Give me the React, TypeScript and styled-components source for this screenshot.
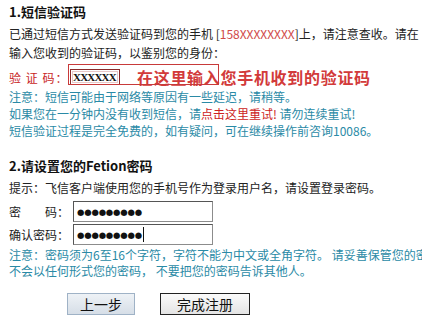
import React from "react";
import styled, { createGlobalStyle } from "styled-components";

const GlobalStyle = createGlobalStyle`
  html, body {
    margin: 0;
    padding: 0;
    background: #ffffff;
    overflow: hidden;
  }
  body {
    font-family: "Noto Sans CJK SC", "Noto Sans", sans-serif;
    font-size: 12px;
    color: #222222;
  }
`;

const Page = styled.div`
  width: 720px;
  padding: 3px 0 0 9px;
`;

const Title = styled.div<{ $top?: number }>`
  font-size: 13px;
  font-weight: 700;
  line-height: 18px;
  color: #111;
  margin-top: ${(p) => p.$top ?? 0}px;
  white-space: nowrap;
`;

const Para = styled.div<{ $top?: number; $lh?: number }>`
  line-height: ${(p) => p.$lh ?? 19}px;
  margin-top: ${(p) => p.$top ?? 0}px;
  white-space: nowrap;
`;

const Phone = styled.span`
  color: #d04848;
`;

const CodeRow = styled.div`
  position: relative;
  display: flex;
  align-items: center;
  height: 22px;
  margin-top: 4px;
  white-space: nowrap;
`;

const RedLabel = styled.span`
  color: #c81e1e;
  width: 61px;
  letter-spacing: 1px;
`;

const CodeBox = styled.div`
  box-sizing: border-box;
  width: 50px;
  height: 16px;
  border: 1px solid #8a2a2a;
  outline: 1px solid #e8c8c8;
  outline-offset: -3px;
  font-family: "Liberation Serif", serif;
  font-weight: 700;
  font-size: 11px;
  line-height: 14px;
  color: #111;
  padding-left: 2px;
  letter-spacing: -0.8px;
  overflow: hidden;
`;

const Hint = styled.span`
  margin-left: 17px;
  color: #d23a3a;
  font-size: 16px;
  font-weight: 700;
  letter-spacing: 0.7px;
`;

const Mark = styled.div`
  position: absolute;
  left: 59px;
  top: -2px;
  width: 151px;
  height: 21px;
  border: 1px solid #c83a3a;
  box-sizing: border-box;
  pointer-events: none;
`;

const Notes = styled.div<{ $lh: number; $top?: number }>`
  color: #2a8aa6;
  line-height: ${(p) => p.$lh}px;
  margin-top: ${(p) => p.$top ?? 0}px;
  white-space: nowrap;
`;

const Alert = styled.span`
  color: #cc2222;
`;

const FormGrid = styled.div`
  display: grid;
  grid-template-columns: 64px 140px;
  row-gap: 2px;
  margin-top: 4px;
  align-items: center;
`;

const FieldLabel = styled.span`
  line-height: 21px;
  white-space: pre;
`;

const PwBox = styled.div`
  box-sizing: border-box;
  height: 21px;
  border: 1px solid #8c8c8c;
  border-top-color: #555;
  border-left-color: #555;
  display: flex;
  align-items: center;
  padding-left: 3px;
  font-family: "DejaVu Sans", sans-serif;
  font-size: 8.5px;
  letter-spacing: -0.2px;
  color: #111;
`;

const Caret = styled.span`
  display: inline-block;
  width: 1px;
  height: 15px;
  background: #111;
  margin-left: 1px;
`;

const Buttons = styled.div`
  display: flex;
  gap: 25px;
  margin: 14px 0 0 58px;
`;

const Btn = styled.button<{ $primary?: boolean }>`
  box-sizing: border-box;
  height: 22px;
  width: ${(p) => (p.$primary ? 90 : 68)}px;
  padding: 0;
  font-family: "Noto Sans CJK SC", sans-serif;
  font-size: 14px;
  line-height: 20px;
  color: #111;
  border: 1px solid ${(p) => (p.$primary ? "#222" : "#9fb2c6")};
  background: ${(p) =>
    p.$primary
      ? "linear-gradient(#fbfbfb, #e4e4e4)"
      : "linear-gradient(#eef2f6, #d6dee7)"};
`;

export default function App() {
  return (
    <>
      <GlobalStyle />
      <Page>
        <Title>1.短信验证码</Title>
        <Para $top={3}>
          已通过短信方式发送验证码到您的手机 [<Phone>158XXXXXXXX</Phone>]上，请注意查收。请在
        </Para>
        <Para>输入您收到的验证码，以鉴别您的身份：</Para>
        <CodeRow>
          <RedLabel>验 证 码：</RedLabel>
          <CodeBox>XXXXXX</CodeBox>
          <Hint>在这里输入您手机收到的验证码</Hint>
          <Mark />
        </CodeRow>
        <Notes $lh={17}>
          <div>注意：短信可能由于网络等原因有一些延迟，请稍等。</div>
          <div>
            如果您在一分钟内没有收到短信，请<Alert>点击这里重试!</Alert> 请勿连续重试!
          </div>
          <div>短信验证过程是完全免费的，如有疑问，可在继续操作前咨询10086。</div>
        </Notes>
        <Title $top={18}>2.请设置您的Fetion密码</Title>
        <Para $top={4} $lh={18}>
          提示：飞信客户端使用您的手机号作为登录用户名，请设置登录密码。
        </Para>
        <FormGrid>
          <FieldLabel>{"密　　码："}</FieldLabel>
          <PwBox>●●●●●●●●●</PwBox>
          <FieldLabel>确认密码：</FieldLabel>
          <PwBox>
            ●●●●●●●●●
            <Caret />
          </PwBox>
        </FormGrid>
        <Notes $lh={16} $top={2}>
          <div>注意：密码须为6至16个字符，字符不能为中文或全角字符。 请妥善保管您的密码，飞信</div>
          <div>不会以任何形式您的密码， 不要把您的密码告诉其他人。</div>
        </Notes>
        <Buttons>
          <Btn type="button">上一步</Btn>
          <Btn type="button" $primary>
            完成注册
          </Btn>
        </Buttons>
      </Page>
    </>
  );
}
